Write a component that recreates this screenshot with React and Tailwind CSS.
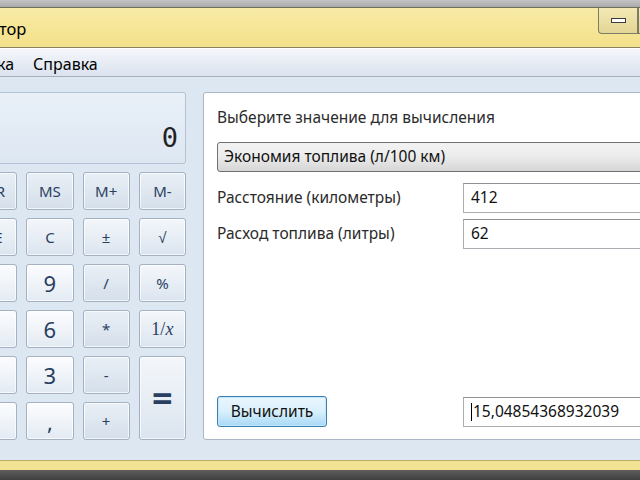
import React from "react";

const rows = [
  [
    { t: "MR", k: "op" },
    { t: "MS", k: "op" },
    { t: "M+", k: "op" },
    { t: "M-", k: "op" },
  ],
  [
    { t: "CE", k: "fn" },
    { t: "C", k: "fn" },
    { t: "±", k: "fn" },
    { t: "√", k: "fn" },
  ],
  [
    { t: "8", k: "num" },
    { t: "9", k: "num" },
    { t: "/", k: "op" },
    { t: "%", k: "fn" },
  ],
  [
    { t: "5", k: "num" },
    { t: "6", k: "num" },
    { t: "*", k: "op" },
    { t: "1/x", k: "fn" },
  ],
];

function Key({ label, kind, className = "" }) {
  const face =
    kind === "num"
      ? "bg-gradient-to-b from-[#fbfcfe] via-[#f0f4f9] to-[#e3eaf3] text-[22px]"
      : kind === "op"
      ? "bg-gradient-to-b from-[#e9eff6] via-[#dfe7f0] to-[#d5dfeb] text-[15px]"
      : "bg-gradient-to-b from-[#f3f6fa] via-[#e8eef5] to-[#dbe4ef] text-[15px]";
  return (
    <div
      className={`flex items-center justify-center rounded-[3px] border border-[#a3b1c3] shadow-[inset_0_0_0_1px_rgba(255,255,255,0.7)] text-[#2a3f5f] ${face} ${className}`}
    >
      {label === "1/x" ? (
        <span className="font-['Liberation_Serif',serif] text-[18px]">
          1/<i>x</i>
        </span>
      ) : (
        label
      )}
    </div>
  );
}

function Field({ children }) {
  return (
    <div className="h-[30px] flex-1 border border-[#abadb3] border-t-[#8e9196] bg-white flex items-center pl-[7px] text-[15.5px] text-[#111]">
      {children}
    </div>
  );
}

export default function App() {
  return (
    <div className="w-[640px] h-[480px] overflow-hidden flex flex-col bg-[#dde7f2] font-['Noto_Sans',sans-serif]">
      <div className="h-[8px] bg-gradient-to-b from-[#c4c4c4] to-[#a9a9a9] border-b border-[#6e6e5a]" />
      <div className="h-[40px] flex justify-between bg-gradient-to-b from-[#f7eaa6] via-[#f6e697] to-[#f3e08c] border-b border-[#8a8160]">
        <div className="pt-[13px] text-[16.5px] text-black leading-none -ml-[1px]">тор</div>
        <div className="flex -mr-[38px]">
          <div className="w-[40px] h-[26px] rounded-bl-[4px] border border-t-0 border-[#7d7a68] bg-gradient-to-b from-[#f3e9b4] to-[#e3d594] flex items-center justify-center">
            <div className="w-[15px] h-[5px] bg-white border border-[#3b3b3b]" />
          </div>
          <div className="w-[40px] h-[26px] border border-t-0 border-[#7d7a68] bg-gradient-to-b from-[#f3e9b4] to-[#e3d594]" />
        </div>
      </div>
      <div className="h-[29px] flex items-center gap-[19px] pt-[3px] border-t border-white border-b border-b-[#a6b1c0] bg-gradient-to-b from-[#f4f6fa] to-[#dbe3ef] text-[16px] text-black -ml-[3px]">
        <span>ка</span>
        <span>Справка</span>
      </div>
      <div className="flex-1 flex pt-[15px] pb-[18px] min-h-0">
        <div className="-ml-[30px] w-[216px] shrink-0 flex flex-col">
          <div className="h-[72px] rounded-[3px] border border-[#b3c2d4] bg-gradient-to-b from-[#e9f0f8] to-[#dde7f2] flex items-center justify-end pr-[7px] pt-[20px]">
            <span className="font-['DejaVu_Sans_Mono',monospace] text-[27px] text-[#222]">0</span>
          </div>
          <div className="mt-[8px] grid grid-cols-4 gap-x-[9px] gap-y-[8px] grid-rows-[38px_38px_38px_38px_38px_38px]">
            {rows.flat().map((b, i) => (
              <Key key={i} label={b.t} kind={b.k} />
            ))}
            <Key label="2" kind="num" />
            <Key label="3" kind="num" />
            <Key label="-" kind="op" />
            <Key
              label="="
              kind="fn"
              className="row-span-2 !text-[36px] font-bold text-[#1c3352]"
            />
            <Key label="0" kind="num" />
            <Key label="," kind="num" />
            <Key label="+" kind="op" />
          </div>
        </div>
        <div className="ml-[17px] w-[460px] shrink-0 h-[348px] rounded-[3px] border border-[#a8b6c7] bg-white flex flex-col pl-[13px] pt-[13px] text-[15.5px] text-[#2b2b2b]">
          <div className="h-[22px] leading-[22px]">Выберите значение для вычисления</div>
          <div className="mt-[14px] h-[30px] rounded-[3px] border border-[#707070] bg-gradient-to-b from-[#f2f2f2] via-[#ebebeb] to-[#d6d6d6] flex items-center pl-[6px] text-[#111]">
            Экономия топлива (л/100 км)
          </div>
          <div className="mt-[11px] flex items-center">
            <span className="w-[246px]">Расстояние (километры)</span>
            <Field>412</Field>
          </div>
          <div className="mt-[6px] flex items-center">
            <span className="w-[246px]">Расход топлива (литры)</span>
            <Field>62</Field>
          </div>
          <div className="mt-auto mb-[12px] flex items-center">
            <div className="w-[110px] h-[31px] rounded-[3px] border border-[#3c7fb1] bg-gradient-to-b from-[#eaf6fd] via-[#d9f0fc] to-[#a7d9f5] shadow-[inset_0_0_0_1px_#c2e6fb] flex items-center justify-center text-[15.5px] text-[#111]">
              Вычислить
            </div>
            <div className="w-[136px]" />
            <Field>
              <span className="w-[1px] h-[18px] bg-black mr-[1px]" />
              15,04854368932039
            </Field>
          </div>
        </div>
      </div>
      <div className="h-[10px] bg-[#f1e294] border-t border-[#b9ab6a]" />
      <div className="h-[10px] bg-gradient-to-b from-[#5e5e5e] to-[#3f3f3f]" />
    </div>
  );
}
